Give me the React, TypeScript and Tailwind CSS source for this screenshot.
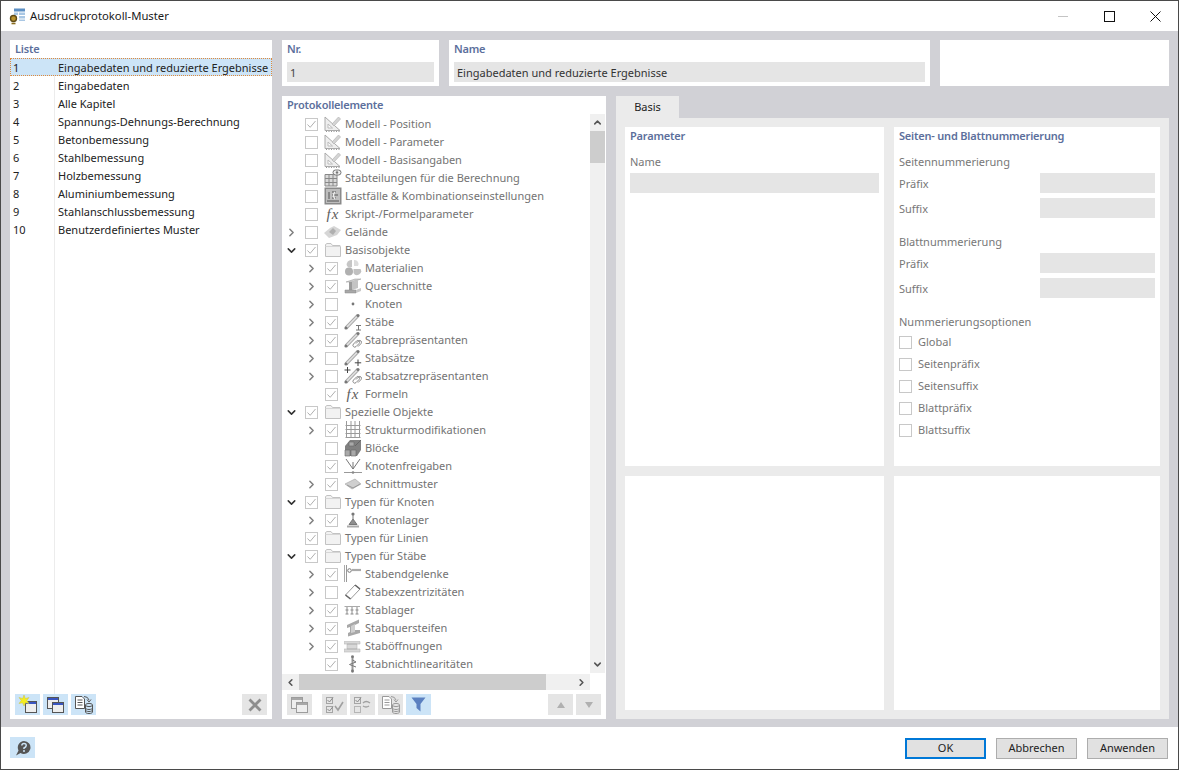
import React from 'react';
import { ChevronRight, ChevronDown, ChevronUp, ChevronLeft } from 'lucide-react';

type IconName =
  | 'ruler' | 'gridcam' | 'cases' | 'fx' | 'terrain' | 'folder' | 'materials' | 'section' | 'dot'
  | 'member' | 'memberRep' | 'memberSet' | 'memberSetRep' | 'mesh' | 'blocks' | 'release' | 'cut'
  | 'support' | 'hinge' | 'ecc' | 'memberSupport' | 'stiffener' | 'opening' | 'nonlinear';

type TreeRow = { label: string; level: 0 | 1; arrow?: 'right' | 'down'; checked?: boolean; icon: IconName };

const listItems = [
  'Eingabedaten und reduzierte Ergebnisse',
  'Eingabedaten',
  'Alle Kapitel',
  'Spannungs-Dehnungs-Berechnung',
  'Betonbemessung',
  'Stahlbemessung',
  'Holzbemessung',
  'Aluminiumbemessung',
  'Stahlanschlussbemessung',
  'Benutzerdefiniertes Muster',
];

const treeRows: TreeRow[] = [
  { label: 'Modell - Position', level: 0, checked: true, icon: 'ruler' },
  { label: 'Modell - Parameter', level: 0, icon: 'ruler' },
  { label: 'Modell - Basisangaben', level: 0, icon: 'ruler' },
  { label: 'Stabteilungen für die Berechnung', level: 0, icon: 'gridcam' },
  { label: 'Lastfälle & Kombinationseinstellungen', level: 0, icon: 'cases' },
  { label: 'Skript-/Formelparameter', level: 0, icon: 'fx' },
  { label: 'Gelände', level: 0, arrow: 'right', icon: 'terrain' },
  { label: 'Basisobjekte', level: 0, arrow: 'down', checked: true, icon: 'folder' },
  { label: 'Materialien', level: 1, arrow: 'right', checked: true, icon: 'materials' },
  { label: 'Querschnitte', level: 1, arrow: 'right', checked: true, icon: 'section' },
  { label: 'Knoten', level: 1, arrow: 'right', icon: 'dot' },
  { label: 'Stäbe', level: 1, arrow: 'right', checked: true, icon: 'member' },
  { label: 'Stabrepräsentanten', level: 1, arrow: 'right', checked: true, icon: 'memberRep' },
  { label: 'Stabsätze', level: 1, arrow: 'right', icon: 'memberSet' },
  { label: 'Stabsatzrepräsentanten', level: 1, arrow: 'right', icon: 'memberSetRep' },
  { label: 'Formeln', level: 1, checked: true, icon: 'fx' },
  { label: 'Spezielle Objekte', level: 0, arrow: 'down', checked: true, icon: 'folder' },
  { label: 'Strukturmodifikationen', level: 1, arrow: 'right', checked: true, icon: 'mesh' },
  { label: 'Blöcke', level: 1, icon: 'blocks' },
  { label: 'Knotenfreigaben', level: 1, checked: true, icon: 'release' },
  { label: 'Schnittmuster', level: 1, arrow: 'right', checked: true, icon: 'cut' },
  { label: 'Typen für Knoten', level: 0, arrow: 'down', checked: true, icon: 'folder' },
  { label: 'Knotenlager', level: 1, arrow: 'right', checked: true, icon: 'support' },
  { label: 'Typen für Linien', level: 0, checked: true, icon: 'folder' },
  { label: 'Typen für Stäbe', level: 0, arrow: 'down', checked: true, icon: 'folder' },
  { label: 'Stabendgelenke', level: 1, arrow: 'right', checked: true, icon: 'hinge' },
  { label: 'Stabexzentrizitäten', level: 1, arrow: 'right', icon: 'ecc' },
  { label: 'Stablager', level: 1, arrow: 'right', checked: true, icon: 'memberSupport' },
  { label: 'Stabquersteifen', level: 1, arrow: 'right', checked: true, icon: 'stiffener' },
  { label: 'Staböffnungen', level: 1, arrow: 'right', checked: true, icon: 'opening' },
  { label: 'Stabnichtlinearitäten', level: 1, checked: true, icon: 'nonlinear' },
];

// double lined bar with end nodes, shared by the member icons
function MemberBar() {
  return (
    <g>
      <path d="M2 15 L14 2.5" stroke="#a8a8a8" strokeWidth="3.4" />
      <path d="M2 15 L14 2.5" stroke="#e2e2e2" strokeWidth="1.6" />
      <circle cx="2" cy="15" r="1.6" fill="#777" />
      <circle cx="14" cy="2.5" r="1.6" fill="#777" />
    </g>
  );
}

function ChainLink() {
  return (
    <g stroke="#888" fill="none">
      <path d="M9.5 13 L12.5 10 A1.8 1.8 0 0 1 15 12.6 L12 15.6 A1.8 1.8 0 0 1 9.5 13 Z" />
      <path d="M12 12.5 L14.5 10 A1.8 1.8 0 0 1 17 12.6 L14 15.6" />
    </g>
  );
}

function TreeIcon({ name }: { name: IconName }) {
  const box = (children: React.ReactNode) => (
    <svg width="18" height="18" viewBox="0 0 18 18" fill="none" className="shrink-0">
      {children}
    </svg>
  );
  switch (name) {
    case 'ruler':
      return box(
        <>
          <path d="M1 2 V15.5 H16 Z" fill="#eee" stroke="#aaa" />
          <path d="M4 9 V13 H8.5 Z" fill="#fff" stroke="#bbb" />
          <path d="M8 9 L14.5 2 L16.5 4 L10 11 Z" fill="#d4d4d4" stroke="#b5b5b5" strokeWidth="0.7" />
          <path d="M2 16.5 H16" stroke="#999" strokeDasharray="1 1.5" />
        </>,
      );
    case 'gridcam':
      return box(
        <>
          <path d="M1 5.5 H13 V17 H1 Z" fill="#d9d9d9" stroke="#888" />
          <path d="M5 5.5 V17 M9 5.5 V17 M1 9.5 H13 M1 13.5 H13" stroke="#888" />
          <rect x="9" y="1" width="8" height="5" rx="2.5" fill="#eee" stroke="#777" />
          <circle cx="13" cy="3.5" r="1.2" fill="#777" />
        </>,
      );
    case 'cases':
      return box(
        <>
          <rect x="0.5" y="0.5" width="17" height="17" fill="#8a8a8a" />
          <rect x="2" y="2" width="14" height="14" fill="#bdbdbd" />
          <path d="M5 5 V12 M8 5 H12 M8 8 H14 M8 11 H12 M3 14 H15" stroke="#555" />
          <path d="M11 5 Q8 8 11 12" stroke="#eee" strokeWidth="1.4" />
        </>,
      );
    case 'fx':
      return (
        <span className="w-[18px] h-[18px] shrink-0 flex items-center justify-center font-['Liberation_Serif',serif] italic text-[15px] tracking-[1px] leading-none text-[#5e5e5e]">
          fx
        </span>
      );
    case 'terrain':
      return box(
        <>
          <path d="M0 10 L6 5 L10 3 L17 7 L13 12 L5 15 Z" fill="#d6d6d6" />
          <path d="M5 9 L9 5 L12 8 L9 12 Z" fill="#b0b0b0" />
        </>,
      );
    case 'folder':
      return box(
        <>
          <path d="M1.5 15.5 V3.5 L3 2.5 H7 L8.5 4.5 H16 L16.5 5.5 V15.5 Z" fill="#f2f2f2" stroke="#c2c2c2" />
          <path d="M1.5 5.5 H16.5" stroke="#d6d6d6" />
        </>,
      );
    case 'materials':
      return box(
        <>
          <path d="M8 1 A4.5 4.5 0 0 0 3 7 A4 4 0 0 0 8 8 Z" fill="#c6c6c6" />
          <path d="M10 1 A4 4 0 0 1 14 7 H10 Z" fill="#dcdcdc" />
          <circle cx="5" cy="12.5" r="4" fill="#b0b0b0" />
          <path d="M9.5 10 H16.5 A4 4 0 0 1 9.5 14 Z" fill="#c0c0c0" />
        </>,
      );
    case 'section':
      return box(
        <>
          <path d="M2 5 L11 2 H17 L8 5 Z" fill="#d0d0d0" stroke="#999" strokeWidth="0.5" />
          <path d="M5 5 H8 V13 H5 Z" fill="#9c9c9c" />
          <path d="M8 5 L14 3 V11 L8 13 Z" fill="#c4c4c4" />
          <path d="M1 13 H12 V16 H1 Z" fill="#a8a8a8" stroke="#8a8a8a" strokeWidth="0.5" />
          <path d="M12 13 L17 11 V14 L12 16 Z" fill="#c9c9c9" />
        </>,
      );
    case 'dot':
      return box(<circle cx="9" cy="9" r="1.4" fill="#777" />);
    case 'member':
      return box(
        <>
          <MemberBar />
          <path d="M12 12.5 H17 M14.5 12.5 V17 M12 17 H17" stroke="#777" />
        </>,
      );
    case 'memberRep':
      return box(
        <>
          <MemberBar />
          <ChainLink />
        </>,
      );
    case 'memberSet':
      return box(
        <>
          <MemberBar />
          <path d="M14 10.5 V17 M10.8 13.8 H17.2" stroke="#444" />
        </>,
      );
    case 'memberSetRep':
      return box(
        <>
          <MemberBar />
          <path d="M0.5 3 H6.5 M3.5 0 V6" stroke="#444" />
          <ChainLink />
        </>,
      );
    case 'mesh':
      return box(<path d="M1.5 4.5 H16.5 M1.5 8.5 H16.5 M1.5 12.5 H16.5 M1.5 16.5 H16.5 M2.5 0 V17 M7 0 V17 M11 0 V17 M15.5 0 V17" stroke="#9a9a9a" />);
    case 'blocks':
      return box(
        <>
          <path d="M1 7 L6 1 H17 V11 L13 17 H1 Z" fill="#808080" />
          <path d="M5 3 H10 V7 H5 Z M1 11 H6 V17 H1 Z M7 11 H12 V17 H7 Z" fill="#a9a9a9" stroke="#666" strokeWidth="0.6" />
          <path d="M11 7 L17 1" stroke="#666" />
        </>,
      );
    case 'release':
      return box(
        <>
          <path d="M9 12 L2 2 M9 12 L16 2 M9 12 V5" stroke="#777" />
          <path d="M0 15.5 H18" stroke="#999" />
          <circle cx="9" cy="15.5" r="1.3" fill="#888" />
        </>,
      );
    case 'cut':
      return box(
        <>
          <path d="M1 9 L11 4 L17 9 L8 14 Z" fill="#cfcfcf" stroke="#aaa" strokeWidth="0.7" />
          <path d="M3 10 L9 13 L16 9" stroke="#999" />
        </>,
      );
    case 'support':
      return box(
        <>
          <circle cx="9" cy="3" r="1.6" fill="#777" />
          <path d="M9 4 V8 L13 13.5 H5 L9 8" fill="#8f8f8f" stroke="#777" />
          <path d="M3 15.5 H15" stroke="#aaa" strokeWidth="2" />
        </>,
      );
    case 'hinge':
      return box(
        <>
          <path d="M0.5 0 V17" stroke="#aaa" />
          <path d="M2.5 0 V17" stroke="#999" />
          <circle cx="5.5" cy="5.5" r="1.8" fill="#fff" stroke="#777" />
          <path d="M8 5 H17" stroke="#aaa" strokeWidth="2.2" />
        </>,
      );
    case 'ecc':
      return box(
        <>
          <path d="M1.5 12 L11 2 L16 6 L6.5 16 Z" fill="#fff" stroke="#999" />
          <path d="M1.5 12 L6.5 16" stroke="#666" strokeWidth="1.6" />
          <path d="M11 2 L16 6" stroke="#666" strokeWidth="1.6" />
        </>,
      );
    case 'memberSupport':
      return box(
        <>
          <path d="M0.5 5.5 H16" stroke="#aaa" />
          <path d="M3 6 V13 M8 6 V13 M13 6 V13 M1.5 9 H4.5 M6.5 9 H9.5 M11.5 9 H14.5 M1.5 13 H4.5 M6.5 13 H9.5 M11.5 13 H14.5" stroke="#8a8a8a" />
        </>,
      );
    case 'stiffener':
      return box(
        <>
          <path d="M3 6 L15 0.5 V4 L11 6 V11 L16 11 V14 L4 17.5 V14 L6 13 V8 L3 9 Z" fill="#a8a8a8" />
          <path d="M7 7 L11 5 V13 L7 14 Z" fill="#cfcfcf" />
        </>,
      );
    case 'opening':
      return box(
        <>
          <path d="M0 4.5 H16 V7 H13 V12 H16 V15 H0 V12 H3 V7 H0 Z" fill="#d8d8d8" stroke="#bbb" strokeWidth="0.6" />
          <path d="M3 7 H13 M3 12 H13" stroke="#aaa" />
        </>,
      );
    case 'nonlinear':
      return box(
        <>
          <path d="M8.5 0.5 V17.5" stroke="#999" strokeWidth="2" />
          <circle cx="8.5" cy="1.8" r="1.4" fill="#777" />
          <circle cx="8.5" cy="16" r="1.4" fill="#777" />
          <path d="M8.5 5 L12 7 L5.5 9.5 L12 12" stroke="#777" />
        </>,
      );
  }
}

function CheckBox({ checked }: { checked?: boolean }) {
  return (
    <span className="w-[13px] h-[13px] border border-[#c8c8c8] bg-white flex items-center justify-center shrink-0">
      {checked && (
        <svg width="11" height="11" viewBox="0 0 11 11" fill="none">
          <path d="M1.5 5.5 L4.2 8.3 L9.5 2" stroke="#b0b0b0" />
        </svg>
      )}
    </span>
  );
}

function TreeLine({ row }: { row: TreeRow }) {
  const Arrow = row.arrow === 'down' ? ChevronDown : ChevronRight;
  return (
    <div className="h-[18px] flex items-center whitespace-nowrap">
      <span className={row.level === 1 ? 'w-[23px] shrink-0' : 'w-[3px] shrink-0'} />
      <span className="w-[20px] shrink-0 flex items-center">
        {row.arrow && <Arrow size={13} strokeWidth={2.8} color={row.arrow === 'down' ? '#333' : '#808080'} />}
      </span>
      <CheckBox checked={row.checked} />
      <span className="w-[6px] shrink-0" />
      <TreeIcon name={row.icon} />
      <span className="ml-[3px] text-[#737373]">{row.label}</span>
    </div>
  );
}

function ToolButton({ active, children, className = '' }: { active?: boolean; children: React.ReactNode; className?: string }) {
  return (
    <button className={`w-[25px] h-[21px] flex items-center justify-center shrink-0 ${active ? 'bg-[#cce4f7]' : 'bg-[#e5e5e5]'} ${className}`}>
      {children}
    </button>
  );
}

function Windows({ dim }: { dim?: boolean }) {
  const bar = dim ? '#a8a8a8' : '#3a55c0';
  const stroke = dim ? '#9c9c9c' : '#555';
  return (
    <svg width="19" height="18" viewBox="0 0 19 18" fill="none">
      <rect x="1.5" y="1.5" width="11" height="11" fill="#eee" stroke={stroke} />
      <path d="M2 3 H12" stroke={bar} strokeWidth="2" />
      <rect x="6.5" y="6.5" width="11" height="10" fill="#eee" stroke={stroke} />
      <path d="M7 8 H17" stroke={bar} strokeWidth="2" />
    </svg>
  );
}

function NewWindow() {
  return (
    <svg width="20" height="19" viewBox="0 0 20 19" fill="none">
      <rect x="7.5" y="6.5" width="11" height="11" fill="#eee" stroke="#555" />
      <path d="M8 8 H18" stroke="#3a55c0" strokeWidth="2" />
      <path d="M6 0 L7.3 3.5 L11 2.5 L8.8 5.5 L11 8.5 L7.5 7.8 L6 11 L4.5 7.8 L1 8.5 L3.2 5.5 L1 2.5 L4.7 3.5 Z" fill="#f5ee20" stroke="#c9c04d" strokeWidth="0.5" />
    </svg>
  );
}

function DocToDb({ color = '#555' }: { color?: string }) {
  return (
    <svg width="20" height="20" viewBox="0 0 20 20" fill="none">
      <path d="M1.5 1.5 H8 L10.5 4 V13.5 H1.5 Z" fill="#fff" stroke={color} />
      <path d="M3.5 5 H8.5 M3.5 7.5 H8.5 M3.5 10 H8.5" stroke={color} />
      <path d="M10 1.5 Q14 1.5 15 5" stroke={color} />
      <path d="M13 4.5 L15 7 L17 4.5" stroke={color} />
      <ellipse cx="15" cy="10" rx="3.5" ry="1.6" stroke={color} />
      <path d="M11.5 10 V17 C11.5 19 18.5 19 18.5 17 V10 M11.5 13 C11.5 15 18.5 15 18.5 13 M11.5 15 C11.5 17 18.5 17 18.5 15" stroke={color} />
    </svg>
  );
}

function Field({ className = '', children }: { className?: string; children?: React.ReactNode }) {
  return <div className={`h-5 bg-[#e5e5e5] flex items-center px-[3px] pt-[2px] ${className}`}>{children}</div>;
}

function Title({ children }: { children: React.ReactNode }) {
  return <div className="h-[18px] leading-[18px] font-semibold tracking-[-0.2px] text-[#5c6f9c]">{children}</div>;
}

function NumberField({ label, className = '' }: { label: string; className?: string }) {
  return (
    <div className={`flex items-center justify-between ${className}`}>
      <span className="text-[#777] pt-[2px]">{label}</span>
      <Field className="w-[115px]" />
    </div>
  );
}

export default function App() {
  return (
    <div className="w-[1179px] h-[770px] bg-white border border-[#4a4a4a] flex flex-col overflow-hidden font-['Noto_Sans',sans-serif] text-[11px] text-[#333]">
      {/* title bar */}
      <div className="h-[30px] shrink-0 flex items-center pl-[8px]">
        <svg width="17" height="17" viewBox="0 0 17 17" fill="none">
          <rect x="5" y="0.5" width="11" height="3" fill="#5c8fc4" />
          <rect x="5" y="4.5" width="4" height="2.5" fill="#a9c7e4" />
          <rect x="10" y="4.5" width="6" height="2.5" fill="#a9c7e4" />
          <rect x="10" y="8" width="6" height="2.5" fill="#a9c7e4" />
          <rect x="10" y="11.5" width="6" height="1.5" fill="#a9c7e4" />
          <circle cx="4.5" cy="10.5" r="3" fill="#b8932f" stroke="#5e4a17" strokeWidth="1.4" />
          <path d="M2.5 15.5 H6.5" stroke="#8a6d1f" strokeWidth="1.6" />
        </svg>
        <span className="ml-[4px] text-[11.3px] text-[#1a1a1a]">Ausdruckprotokoll-Muster</span>
        <div className="ml-auto flex items-center">
          <span className="w-[46px] flex justify-center"><span className="w-[10px] h-px bg-[#c4c4c4]" /></span>
          <span className="w-[46px] flex justify-center"><span className="w-[11px] h-[11px] border border-[#111]" /></span>
          <span className="w-[46px] flex justify-center">
            <svg width="11" height="11" viewBox="0 0 11 11" fill="none">
              <path d="M0.5 0.5 L10.5 10.5 M10.5 0.5 L0.5 10.5" stroke="#111" />
            </svg>
          </span>
        </div>
      </div>

      {/* main area */}
      <div className="h-[696px] shrink-0 bg-[#d1d1d6] flex gap-[10px] pt-[9px] px-[9px] pb-[8px]">
        {/* left list */}
        <div className="w-[262px] shrink-0 bg-white flex flex-col">
          <div className="h-[18px] pl-[5px] leading-[18px] font-semibold tracking-[-0.2px] text-[#5c6f9c]">Liste</div>
          <div className="flex-1 relative">
            <div className="absolute left-[44px] top-0 bottom-0 w-px bg-[#ececec]" />
            {listItems.map((item, i) => (
              <div
                key={item}
                className={`relative h-[18px] flex items-center pl-[3px] pt-[2px] whitespace-nowrap text-[#222] ${i === 0 ? 'bg-[#cce4f7] outline-1 outline-dotted outline-[#e08a3c] -outline-offset-1' : ''}`}
              >
                <span className="w-[45px] shrink-0">{i + 1}</span>
                <span>{item}</span>
              </div>
            ))}
          </div>
          <div className="h-[21px] mb-[4px] px-[5px] flex gap-[3px] relative">
            <ToolButton active><NewWindow /></ToolButton>
            <ToolButton active><Windows /></ToolButton>
            <ToolButton active><DocToDb /></ToolButton>
            <ToolButton className="ml-auto">
              <svg width="14" height="14" viewBox="0 0 14 14" fill="none">
                <path d="M1.5 1.5 L12.5 12.5 M12.5 1.5 L1.5 12.5" stroke="#8e8e8e" strokeWidth="2.8" />
              </svg>
            </ToolButton>
          </div>
        </div>

        {/* center + right */}
        <div className="flex-1 flex flex-col gap-[10px] min-w-0">
          <div className="h-[46px] shrink-0 flex gap-[10px]">
            <div className="w-[157px] bg-white px-[5px]">
              <Title>Nr.</Title>
              <Field className="mt-[4px] text-[#444]">1</Field>
            </div>
            <div className="w-[481px] bg-white px-[5px]">
              <Title>Name</Title>
              <Field className="mt-[4px] text-[#333]">Eingabedaten und reduzierte Ergebnisse</Field>
            </div>
            <div className="flex-1 bg-white" />
          </div>

          <div className="flex-1 flex gap-[10px] min-h-0">
            {/* tree */}
            <div className="w-[324px] shrink-0 bg-white flex flex-col">
              <div className="h-[18px] pl-[5px] leading-[18px] font-semibold tracking-[-0.2px] text-[#5c6f9c]">Protokollelemente</div>
              <div className="h-[559px] flex shrink-0">
                <div className="w-[308px] overflow-hidden pt-px">
                  {treeRows.map((row) => (
                    <TreeLine key={row.label} row={row} />
                  ))}
                </div>
                <div className="w-[15px] bg-[#f0f0f0] flex flex-col items-center">
                  <span className="h-[17px] shrink-0 flex items-center"><ChevronUp size={11} strokeWidth={3.4} color="#555" /></span>
                  <div className="w-full h-[32px] bg-[#cdcdcd] shrink-0" />
                  <span className="h-[17px] shrink-0 flex items-center mt-auto"><ChevronDown size={11} strokeWidth={3.4} color="#555" /></span>
                </div>
              </div>
              <div className="w-[308px] h-[16px] mt-px bg-[#f0f0f0] flex items-center shrink-0">
                <span className="w-[17px] shrink-0 flex justify-center"><ChevronLeft size={11} strokeWidth={3.4} color="#555" /></span>
                <div className="w-[247px] h-full bg-[#cdcdcd]" />
                <span className="w-[17px] ml-auto shrink-0 flex justify-center"><ChevronRight size={11} strokeWidth={3.4} color="#555" /></span>
              </div>
              <div className="mt-[4px] px-[5px] flex">
                <ToolButton><Windows dim /></ToolButton>
                <div className="w-[10px]" />
                <div className="flex gap-[3px]">
                  <ToolButton>
                    <svg width="20" height="18" viewBox="0 0 20 18" fill="none">
                      <rect x="1.5" y="1.5" width="6" height="6" stroke="#a5a5a5" />
                      <rect x="1.5" y="10.5" width="6" height="6" stroke="#a5a5a5" />
                      <path d="M2.5 4 L4.5 6 L8 1.5 M2.5 13 L4.5 15 L8 10.5" stroke="#8a8a8a" />
                      <path d="M10 10 L13 14 L18 6" stroke="#a0a0a0" strokeWidth="1.6" />
                    </svg>
                  </ToolButton>
                  <ToolButton>
                    <svg width="20" height="18" viewBox="0 0 20 18" fill="none">
                      <rect x="1.5" y="1.5" width="6" height="6" stroke="#a5a5a5" />
                      <rect x="1.5" y="10.5" width="6" height="6" stroke="#b5b5b5" />
                      <path d="M2.5 4 L4.5 6 L8 1.5" stroke="#8a8a8a" />
                      <path d="M10 7 Q13 4 17 7 M16 10 Q13 12 10 10" stroke="#a0a0a0" strokeWidth="1.4" />
                    </svg>
                  </ToolButton>
                  <ToolButton><DocToDb color="#999" /></ToolButton>
                  <ToolButton active>
                    <svg width="15" height="15" viewBox="0 0 15 15" fill="none">
                      <path d="M0.5 0.5 H14.5 L9.5 7 V14.5 L5.5 11 V7 Z" fill="#5b80c0" />
                    </svg>
                  </ToolButton>
                </div>
                <div className="ml-auto flex gap-[3px]">
                  <ToolButton><span className="w-0 h-0 border-x-[4px] border-x-transparent border-b-[6px] border-b-[#b0b0b0]" /></ToolButton>
                  <ToolButton><span className="w-0 h-0 border-x-[4px] border-x-transparent border-t-[6px] border-t-[#b0b0b0]" /></ToolButton>
                </div>
              </div>
            </div>

            {/* tab panel */}
            <div className="flex-1 flex flex-col min-w-0">
              <div className="w-[63px] h-[22px] shrink-0 bg-[#ebebeb] flex items-center justify-center text-[#222]">Basis</div>
              <div className="flex-1 bg-[#ebebeb] p-[9px] grid grid-cols-[259px_266px] grid-rows-[339px_234px] gap-x-[10px] gap-y-[10px]">
                <div className="bg-white px-[5px]">
                  <Title>Parameter</Title>
                  <div className="mt-[8px] h-[18px] leading-[18px] text-[#777]">Name</div>
                  <Field className="w-[249px] mt-[2px]" />
                </div>
                <div className="bg-white px-[5px]">
                  <Title>Seiten- und Blattnummerierung</Title>
                  <div className="mt-[8px] h-[18px] leading-[18px] text-[#777]">Seitennummerierung</div>
                  <NumberField label="Präfix" className="mt-[2px]" />
                  <NumberField label="Suffix" className="mt-[5px]" />
                  <div className="mt-[15px] h-[18px] leading-[18px] text-[#777]">Blattnummerierung</div>
                  <NumberField label="Präfix" className="mt-[2px]" />
                  <NumberField label="Suffix" className="mt-[5px]" />
                  <div className="mt-[15px] h-[18px] leading-[18px] text-[#777]">Nummerierungsoptionen</div>
                  <div className="mt-[2px] flex flex-col gap-[4px]">
                    {['Global', 'Seitenpräfix', 'Seitensuffix', 'Blattpräfix', 'Blattsuffix'].map((opt) => (
                      <div key={opt} className="h-[18px] flex items-center gap-[6px] text-[#777]">
                        <CheckBox />
                        <span>{opt}</span>
                      </div>
                    ))}
                  </div>
                </div>
                <div className="bg-white" />
                <div className="bg-white" />
              </div>
            </div>
          </div>
        </div>
      </div>

      {/* footer */}
      <div className="flex-1 flex items-center pl-[9px] pr-[10px]">
        <ToolButton active className="mb-px">
          <svg width="18" height="18" viewBox="0 0 18 18" fill="none">
            <path d="M10 2 A6.5 6.5 0 1 1 6.5 14 L2 16.5 L4.5 11.5 A6.5 6.5 0 0 1 10 2 Z" fill="#555" />
            <path d="M7.8 6.5 Q8 4.5 10 4.5 Q12.4 4.5 12.2 6.6 Q12 8 10 9 V10" stroke="#cce4f7" strokeWidth="1.5" />
            <circle cx="10" cy="12" r="1" fill="#cce4f7" />
          </svg>
        </ToolButton>
        <div className="ml-auto flex gap-[10px] text-[#222] mt-px">
          <button className="w-[81px] h-[21px] bg-[#e1e1e1] border-2 border-[#0078d7]">OK</button>
          <button className="w-[81px] h-[21px] bg-[#e1e1e1] border border-[#adadad]">Abbrechen</button>
          <button className="w-[81px] h-[21px] bg-[#e1e1e1] border border-[#adadad]">Anwenden</button>
        </div>
      </div>
    </div>
  );
}
